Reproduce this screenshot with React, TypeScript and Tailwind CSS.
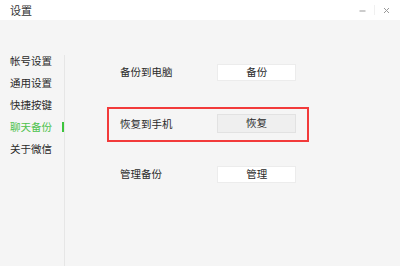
import React from "react";

const font = { fontFamily: '"Noto Sans CJK SC", "Noto Sans", sans-serif' };

function Row({
  label,
  btn,
  highlight,
  className,
}: {
  label: string;
  btn: string;
  highlight?: boolean;
  className?: string;
}) {
  return (
    <div
      className={
        "ml-[42px] w-[202px] h-[35px] px-[11px] flex items-center border-2 " +
        (highlight ? "border-[#f23a3a] " : "border-transparent ") +
        (className ?? "")
      }
    >
      <div className="w-[99px] text-[10.5px] text-[#2a2a2a] leading-none">{label}</div>
      {highlight ? (
        <div className="w-[81px] h-[19px] mb-[3px] bg-[#efefef] border border-[#e2e2e2] flex items-center justify-center text-[10.5px] text-[#2a2a2a] leading-none">
          {btn}
        </div>
      ) : (
        <div className="w-[80px] h-[17px] bg-white border border-[#ececec] flex items-center justify-center text-[10.5px] text-[#2a2a2a] leading-none">
          {btn}
        </div>
      )}
    </div>
  );
}

export default function App() {
  const nav = ["帐号设置", "通用设置", "快捷按键", "聊天备份", "关于微信"];
  return (
    <div style={font} className="w-[400px] h-[266px] flex flex-col bg-[#f5f5f5] overflow-hidden">
      <div className="h-[20px] bg-white flex items-center justify-between pl-[10px] pr-[10px]">
        <span className="text-[11px] text-[#333] leading-none">设置</span>
        <div className="flex items-center gap-[8px]">
          <svg width="7" height="7" viewBox="0 0 7 7">
            <line x1="0.5" y1="4" x2="6.5" y2="4" stroke="#999" strokeWidth="1" />
          </svg>
          <div className="w-px h-[10px] bg-[#f0f0f0]" />
          <svg width="7" height="7" viewBox="0 0 7 7">
            <path d="M1 1 L6 6 M6 1 L1 6" stroke="#999" strokeWidth="1" />
          </svg>
        </div>
      </div>
      <div className="flex flex-1">
        <div className="w-[64px] pt-[30px] flex flex-col">
          {nav.map((n, i) => (
            <div key={n} className="h-[22px] flex items-center justify-between pl-[10px]">
              <span
                className={
                  "text-[10.5px] leading-none " +
                  (i === 3 ? "text-[#4cc24c]" : "text-[#2a2a2a]")
                }
              >
                {n}
              </span>
              {i === 3 && <div className="w-[2px] h-[10px] bg-[#3cc43c]" />}
            </div>
          ))}
        </div>
        <div className="w-px bg-[#e6e6e6] mt-[35px]" />
        <div className="flex-1 flex flex-col pt-[35px]">
          <Row label="备份到电脑" btn="备份" />
          <Row label="恢复到手机" btn="恢复" highlight className="mt-[17px]" />
          <Row label="管理备份" btn="管理" className="mt-[15px]" />
        </div>
      </div>
    </div>
  );
}
